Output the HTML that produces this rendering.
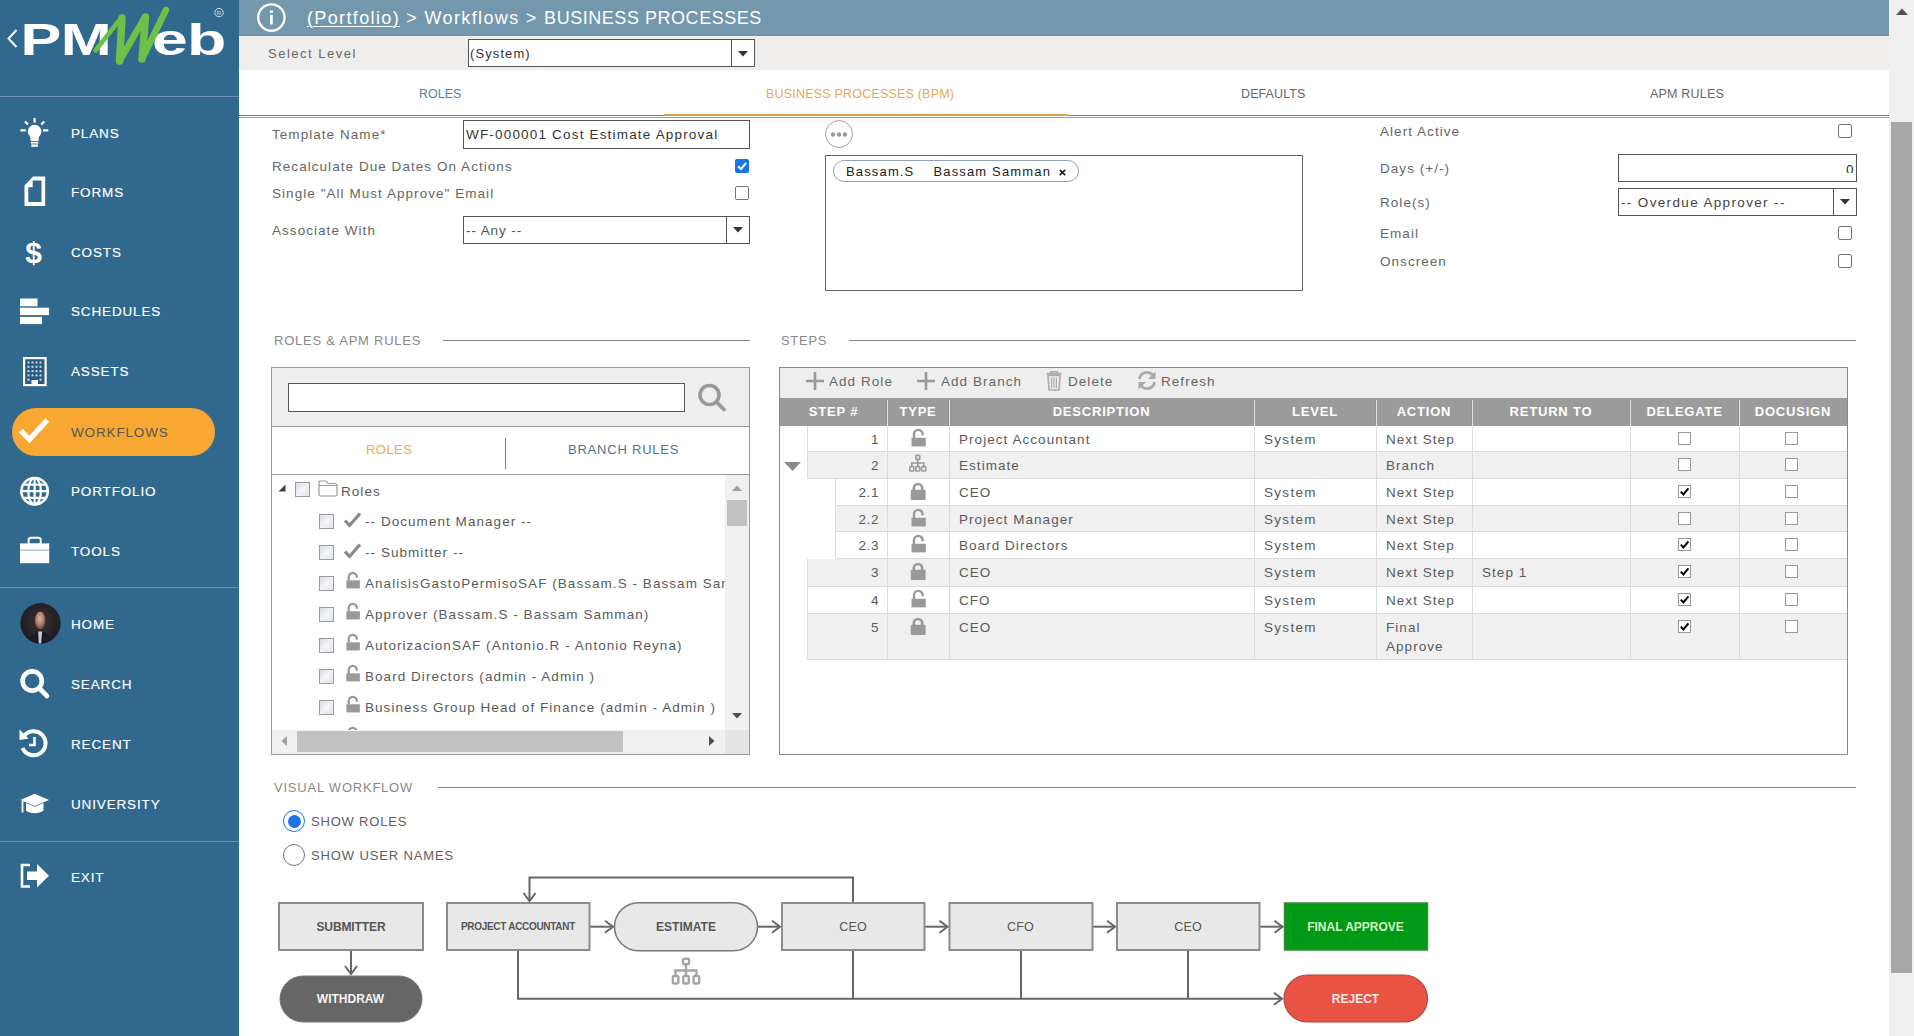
<!DOCTYPE html>
<html><head><meta charset="utf-8">
<style>
*{box-sizing:border-box;margin:0;padding:0}
html,body{width:1914px;height:1036px;overflow:hidden;background:#fff;font-family:"Liberation Sans",sans-serif;color:#555}
.a{position:absolute}
.t{position:absolute;white-space:nowrap}
#side{position:absolute;left:0;top:0;width:239px;height:1036px;background:#31688e}
.nav{position:absolute;left:71px;height:20px;line-height:20px;font-size:13.5px;color:#fff;letter-spacing:0.85px;white-space:nowrap;-webkit-text-stroke:0.15px currentColor}
.sep{position:absolute;left:0;width:239px;height:1px;background:#6b93b3}
.ic{position:absolute}
.lab{height:19px;line-height:19px;font-size:13.5px;letter-spacing:1.05px;color:#666}
.sec{height:19px;line-height:19px;font-size:13px;letter-spacing:0.75px;color:#888}
.tx{height:20px;line-height:20px;font-size:13.5px;letter-spacing:1.05px;color:#5a5a5a}
.hd{height:20px;line-height:20px;font-size:13px;font-weight:bold;letter-spacing:0.8px;color:#fff;text-align:center}
.gcb{width:13px;height:13px;border:1px solid #999;background:#fff}
.cb{width:14px;height:14px;border:1px solid #767676;border-radius:2px;background:#fff}
</style></head><body>
<div id="side">
  <svg class="a" style="left:0;top:0" width="239" height="96" viewBox="0 0 239 96">
    <path d="M16.5 30 L8.5 38.5 L16.5 47" fill="none" stroke="#fff" stroke-width="2"/>
    <text transform="translate(20.5,55.2) scale(1.36,1)" font-family="Liberation Sans" font-weight="bold" font-size="45" fill="#fff" letter-spacing="-0.5">PM</text>
    <text transform="translate(152,55.2) scale(1.43,1)" font-family="Liberation Sans" font-weight="bold" font-size="45" fill="#fff" letter-spacing="-0.5">eb</text>
    <g fill="none" stroke="#6cc04a" stroke-linecap="round" stroke-linejoin="round">
    <path d="M95.5 50.5 L121.5 17.5" stroke-width="4.5"/>
    <path d="M122 18 L119.5 61" stroke-width="7.5"/>
    <path d="M119.5 61 L145 17" stroke-width="6.5"/>
    <path d="M145.5 17 L142 59" stroke-width="7.5"/>
    <path d="M142 59 L166 10" stroke-width="6.5"/>
    </g>
    <circle cx="219" cy="12.6" r="4.2" fill="none" stroke="#cfe0ee" stroke-width="1"/>
    <text x="219" y="14.8" font-family="Liberation Sans" font-size="6" fill="#cfe0ee" text-anchor="middle">R</text>
  </svg>
  <div class="sep" style="top:96px"></div>
  <svg class="a" style="left:0;top:100px" width="239" height="800" viewBox="0 100 239 800">
    <!-- bulb -->
    <circle cx="34.6" cy="131.5" r="6.8" fill="#fff"/>
    <path d="M30 134 L39.2 134 L38.5 141 L30.7 141 Z" fill="#fff"/>
    <rect x="30.8" y="141.8" width="7.6" height="1.8" fill="#fff"/>
    <rect x="31.3" y="144.4" width="6.6" height="2.4" fill="#fff"/>
    <path d="M34.6 118 V122.5 M20.5 130.3 H25.8 M43 130.3 H48.3 M25 121.5 L28 124.5 M44.2 121.5 L41.2 124.5" stroke="#fff" stroke-width="2.2"/>
    <!-- forms -->
    <path d="M33 176.6 L45.2 176.6 L45.2 206 L24.5 206 L24.5 185.5 Z M32.7 180.5 L32.7 187.2 L28.3 187.2 L28.3 201.9 L41.5 201.9 L41.5 180.5 Z" fill="#fff" fill-rule="evenodd"/>
    <!-- $ -->
    <text x="33.7" y="263" font-family="Liberation Sans" font-weight="bold" font-size="30" fill="#fff" text-anchor="middle">$</text>
    <!-- schedules -->
    <rect x="20" y="298.5" width="17.5" height="7.8" fill="#fff"/>
    <rect x="20" y="307.7" width="29" height="7.4" fill="#fff"/>
    <rect x="20" y="316.9" width="22" height="7.2" fill="#fff"/>
    <!-- assets -->
    <rect x="23" y="357" width="23.7" height="29.2" fill="#fff"/>
    <rect x="25.2" y="359.2" width="19.3" height="24.8" fill="#2a5a80"/>
    <g fill="#c8dcea">
      <rect x="27.5" y="361.5" width="2" height="2"/><rect x="31.5" y="361.5" width="2" height="2"/><rect x="35.5" y="361.5" width="2" height="2"/><rect x="39.5" y="361.5" width="2" height="2"/>
      <rect x="27.5" y="365.8" width="2" height="2"/><rect x="31.5" y="365.8" width="2" height="2"/><rect x="35.5" y="365.8" width="2" height="2"/><rect x="39.5" y="365.8" width="2" height="2"/>
      <rect x="27.5" y="370.1" width="2" height="2"/><rect x="31.5" y="370.1" width="2" height="2"/><rect x="35.5" y="370.1" width="2" height="2"/><rect x="39.5" y="370.1" width="2" height="2"/>
      <rect x="27.5" y="374.4" width="2" height="2"/><rect x="31.5" y="374.4" width="2" height="2"/><rect x="35.5" y="374.4" width="2" height="2"/><rect x="39.5" y="374.4" width="2" height="2"/>
      <rect x="27.5" y="378.7" width="2" height="2"/><rect x="39.5" y="378.7" width="2" height="2"/>
    </g>
    <rect x="31.5" y="380" width="6.5" height="5" fill="#fff"/>
    <!-- check -->
    <path d="M22.5 432.5 L29.5 439.5 L45.5 422" fill="none" stroke="#fff" stroke-width="5.2" stroke-linecap="square"/>
    <!-- globe -->
    <circle cx="34.6" cy="491.2" r="13.2" fill="none" stroke="#fff" stroke-width="2.6"/>
    <ellipse cx="34.6" cy="491.2" rx="6.3" ry="13.2" fill="none" stroke="#fff" stroke-width="2.2"/>
    <path d="M34.6 478 V504.4 M21.4 491.2 H47.8 M23.2 484.6 H46 M23.2 497.8 H46" stroke="#fff" stroke-width="2.2"/>
    <!-- briefcase -->
    <rect x="28.6" y="537.8" width="12.2" height="7" rx="2.5" fill="none" stroke="#fff" stroke-width="2"/>
    <rect x="20" y="543.4" width="29.2" height="19.8" fill="#fff"/>
    <rect x="20" y="549.6" width="29.2" height="1.2" fill="#9fb6c6"/>
    <!-- avatar -->
    <defs><radialGradient id="av" cx="0.5" cy="0.45" r="0.55"><stop offset="0" stop-color="#3a3032"/><stop offset="1" stop-color="#1e1b20"/></radialGradient><radialGradient id="face" cx="0.45" cy="0.4" r="0.6"><stop offset="0" stop-color="#d8b2a2"/><stop offset="0.6" stop-color="#a87e6e"/><stop offset="1" stop-color="#5a4038"/></radialGradient></defs>
    <circle cx="40.5" cy="623.3" r="20.2" fill="url(#av)"/>
    <ellipse cx="40.3" cy="620.5" rx="5.3" ry="9" fill="url(#face)"/>
    <clipPath id="avc"><circle cx="40.5" cy="623.3" r="20.2"/></clipPath><g clip-path="url(#avc)"><path d="M27 645 Q31 633 40 631 Q49 633 54 645 Z" fill="#1a1a24"/>
    <path d="M38.2 631.5 L42.2 631.5 L41 645 L38.8 645 Z" fill="#c8c8d4"/></g>
    <!-- search -->
    <circle cx="32.2" cy="681" r="9.6" fill="none" stroke="#fff" stroke-width="4.6"/>
    <path d="M39 688 L47 696" stroke="#fff" stroke-width="4.6" stroke-linecap="round"/>
    <!-- recent -->
    <path d="M24 736 A12 12 0 1 1 22.5 748" fill="none" stroke="#fff" stroke-width="4"/>
    <path d="M19.5 729.5 L28.5 738.5 L19.5 740 Z" fill="#fff"/>
    <path d="M34.5 737 V745 H29" fill="none" stroke="#fff" stroke-width="2.6"/>
    <!-- university -->
    <path d="M20.4 800 L34.7 793.8 L49 800 L34.7 806 Z" fill="#fff"/>
    <path d="M26 803 V810.5 C30 814 39 814 43.5 810.5 V803 L34.7 806.8 Z" fill="#fff"/>
    <path d="M22.5 801 V812.5" stroke="#fff" stroke-width="1.8"/>
    <!-- exit -->
    <path d="M30 865 H22 V886.5 H30" fill="none" stroke="#fff" stroke-width="2.6"/>
    <path d="M27 871.5 H37 V864 L49 875.7 L37 887.5 V880 H27 Z" fill="#fff"/>
  </svg>
  <div class="nav" style="top:124px">PLANS</div>
  <div class="nav" style="top:183px">FORMS</div>
  <div class="nav" style="top:243px">COSTS</div>
  <div class="nav" style="top:302px">SCHEDULES</div>
  <div class="nav" style="top:362px">ASSETS</div>
  <div class="a" style="left:12px;top:408px;width:203px;height:48px;border-radius:24px;background:#f8a832"></div>
  <svg class="a" style="left:0;top:400px" width="60" height="60" viewBox="0 400 60 60"><path d="M22.5 432.5 L29.5 439.5 L45.5 422" fill="none" stroke="#fff" stroke-width="5.2" stroke-linecap="square"/></svg>
  <div class="nav" style="top:423px;color:#555;-webkit-text-stroke:0">WORKFLOWS</div>
  <div class="nav" style="top:482px">PORTFOLIO</div>
  <div class="nav" style="top:542px">TOOLS</div>
  <div class="sep" style="top:587px"></div>
  <div class="nav" style="top:615px">HOME</div>
  <div class="nav" style="top:675px">SEARCH</div>
  <div class="nav" style="top:735px">RECENT</div>
  <div class="nav" style="top:795px">UNIVERSITY</div>
  <div class="sep" style="top:841px"></div>
  <div class="nav" style="top:868px">EXIT</div>
</div>
<!-- header -->
<div class="a" style="left:239px;top:0;width:1650px;height:35px;background:#7397ad"></div>
<div class="a" style="left:239px;top:35px;width:1650px;height:1px;background:#788c9c"></div>
<svg class="a" style="left:255px;top:2px" width="34" height="32" viewBox="255 2 34 32">
  <circle cx="271.4" cy="17.6" r="13.2" fill="none" stroke="#fff" stroke-width="2.4"/>
  <circle cx="271.4" cy="11.6" r="1.7" fill="#fff"/>
  <rect x="270" y="15" width="2.8" height="9.5" fill="#fff"/>
</svg>
<div class="t" style="left:307px;top:8px;height:20px;line-height:20px;font-size:18px;letter-spacing:1.36px;color:#fff"><span style="text-decoration:underline;text-underline-offset:2px;text-decoration-thickness:1px">(Portfolio)</span> &gt; Workflows &gt; <span style="letter-spacing:0.54px">BUSINESS PROCESSES</span></div>
<!-- select level -->
<div class="a" style="left:239px;top:36px;width:1650px;height:34px;background:#f0eeec"></div>
<div class="t" style="left:268px;top:45px;height:18px;line-height:18px;font-size:13px;letter-spacing:1.5px;color:#666">Select Level</div>
<div class="a" style="left:468px;top:39px;width:287px;height:28px;border:1px solid #555;background:#fff"></div>
<div class="a" style="left:731px;top:40px;width:1px;height:26px;background:#555"></div>
<svg class="a" style="left:737px;top:50px" width="12" height="8"><path d="M1 1 H11 L6 6.5 Z" fill="#333"/></svg>
<div class="t" style="left:470px;top:45px;height:18px;line-height:18px;font-size:13px;letter-spacing:1.1px;color:#333">(System)</div>
<!-- tabs -->
<div class="t" style="left:419px;top:86px;height:17px;line-height:17px;font-size:12.5px;letter-spacing:0px;color:#4d84a6">ROLES</div>
<div class="t" style="left:766px;top:86px;height:17px;line-height:17px;font-size:12.5px;letter-spacing:0.2px;color:#e9a756">BUSINESS PROCESSES (BPM)</div>
<div class="t" style="left:1241px;top:86px;height:17px;line-height:17px;font-size:12.5px;letter-spacing:0.1px;color:#666">DEFAULTS</div>
<div class="t" style="left:1650px;top:86px;height:17px;line-height:17px;font-size:12.5px;letter-spacing:0.2px;color:#666">APM RULES</div>
<div class="a" style="left:239px;top:115px;width:1650px;height:1px;background:#7a7a7a"></div>
<div class="a" style="left:239px;top:117px;width:1650px;height:1px;background:#9a9a9a"></div>
<div class="a" style="left:664px;top:114px;width:404px;height:2px;background:#e0a050"></div>
<!-- form left -->
<div class="t lab" style="left:272px;top:125px">Template Name*</div>
<div class="t lab" style="left:272px;top:157px">Recalculate Due Dates On Actions</div>
<div class="t lab" style="left:272px;top:184px">Single "All Must Approve" Email</div>
<div class="t lab" style="left:272px;top:221px">Associate With</div>
<div class="a" style="left:463px;top:120px;width:287px;height:29px;border:1px solid #555;background:#fff"></div>
<div class="t" style="left:466px;top:125px;height:19px;line-height:19px;font-size:13.5px;letter-spacing:1.18px;color:#333">WF-000001 Cost Estimate Approval</div>
<div class="a" style="left:735px;top:159px;width:14px;height:14px;border-radius:2px;background:#1a73e8"></div>
<svg class="a" style="left:735px;top:159px" width="14" height="14"><path d="M3 7.2 L6 10 L11.2 3.8" fill="none" stroke="#fff" stroke-width="2"/></svg>
<div class="a cb" style="left:735px;top:186px"></div>
<div class="a" style="left:463px;top:216px;width:287px;height:28px;border:1px solid #555;background:#fff"></div>
<div class="a" style="left:726px;top:217px;width:1px;height:26px;background:#555"></div>
<svg class="a" style="left:732px;top:226px" width="12" height="8"><path d="M1 1 H11 L6 6.5 Z" fill="#333"/></svg>
<div class="t" style="left:466px;top:221px;height:19px;line-height:19px;font-size:13.5px;letter-spacing:0.9px;color:#555">-- Any --</div>
<!-- middle -->
<div class="a" style="left:825px;top:120px;width:28px;height:28px;border-radius:50%;border:1.5px solid #a0a0a0;background:#fff"></div>
<svg class="a" style="left:829px;top:130px" width="20" height="9"><circle cx="4" cy="4.5" r="2.2" fill="#999"/><circle cx="10" cy="4.5" r="2.2" fill="#999"/><circle cx="16" cy="4.5" r="2.2" fill="#999"/></svg>
<div class="a" style="left:825px;top:155px;width:478px;height:136px;border:1px solid #666;background:#fff"></div>
<div class="a" style="left:833px;top:160px;width:246px;height:22px;border-radius:11px;border:1px solid #8fa3c0;background:#fff"></div>
<div class="t" style="left:846px;top:163px;height:17px;line-height:17px;font-size:13px;letter-spacing:1.15px;color:#222">Bassam.S &nbsp;&nbsp; Bassam Samman</div>
<svg class="a" style="left:1058px;top:167.5px" width="9" height="9"><path d="M1.8 1.8 L7.2 7.2 M7.2 1.8 L1.8 7.2" stroke="#222" stroke-width="1.7"/></svg>
<!-- right -->
<div class="t lab" style="left:1380px;top:122px">Alert Active</div>
<div class="t lab" style="left:1380px;top:159px">Days (+/-)</div>
<div class="t lab" style="left:1380px;top:193px">Role(s)</div>
<div class="t lab" style="left:1380px;top:224px">Email</div>
<div class="t lab" style="left:1380px;top:252px">Onscreen</div>
<div class="a cb" style="left:1838px;top:124px"></div>
<div class="a" style="left:1618px;top:154px;width:239px;height:28px;border:1px solid #555;background:#fff"></div>
<div class="a" style="left:1840px;top:164px;width:16px;height:9px;overflow:hidden"><div class="t" style="left:6px;top:-4px;height:19px;line-height:19px;font-size:13.5px;color:#333">0</div></div>
<div class="a" style="left:1618px;top:188px;width:239px;height:28px;border:1px solid #555;background:#fff"></div>
<div class="a" style="left:1833px;top:189px;width:1px;height:26px;background:#555"></div>
<svg class="a" style="left:1839px;top:198px" width="12" height="8"><path d="M1 1 H11 L6 6.5 Z" fill="#333"/></svg>
<div class="t" style="left:1621px;top:193px;height:19px;line-height:19px;font-size:13.5px;letter-spacing:1.35px;color:#444">-- Overdue Approver --</div>
<div class="a cb" style="left:1838px;top:226px"></div>
<div class="a cb" style="left:1838px;top:254px"></div>
<svg width="0" height="0" style="position:absolute">
<defs>
<symbol id="lko" viewBox="0 0 18 20"><path d="M5 10 V6.2 A4.3 4.3 0 0 1 13.6 6.2 V7.2" fill="none" stroke="#999" stroke-width="2.4"/><rect x="2.5" y="9.8" width="14.3" height="8.6" fill="#999"/></symbol>
<symbol id="lkc" viewBox="0 0 18 20"><path d="M4.8 10 V7.2 A4.2 4.2 0 0 1 13.2 7.2 V10" fill="none" stroke="#999" stroke-width="2.6"/><rect x="1.8" y="8.8" width="14.8" height="10.2" rx="1" fill="#999"/></symbol>
<symbol id="brn" viewBox="0 0 18 20"><g fill="none" stroke="#999" stroke-width="1.6"><rect x="6.8" y="1.4" width="4" height="4" rx="0.8"/><path d="M8.8 5.4 V9 M2.8 12.2 V9 H14.8 V12.2 M8.8 9 V12.2"/><rect x="0.8" y="12.6" width="4" height="4.4" rx="0.8"/><rect x="6.8" y="12.6" width="4" height="4.4" rx="0.8"/><rect x="12.8" y="12.6" width="4" height="4.4" rx="0.8"/></g></symbol>
<linearGradient id="tcg" x1="0" y1="0" x2="1" y2="1"><stop offset="0" stop-color="#d4d8e0"/><stop offset="0.5" stop-color="#f4f6fa"/><stop offset="1" stop-color="#dfe2e8"/></linearGradient>
<symbol id="tcb" viewBox="0 0 15 15"><rect x="0.5" y="0.5" width="14" height="14" fill="url(#tcg)" stroke="#9a9a9a"/><rect x="3" y="3" width="9" height="9" fill="none" stroke="#e6e8ee" stroke-width="1"/></symbol>
</defs></svg>
<div class="t sec" style="left:274px;top:331px">ROLES &amp; APM RULES</div>
<div class="a" style="left:443px;top:340px;width:307px;height:1px;background:#888"></div>
<div class="t sec" style="left:781px;top:331px;letter-spacing:0.7px">STEPS</div>
<div class="a" style="left:849px;top:340px;width:1007px;height:1px;background:#888"></div>
<div class="a" style="left:271px;top:367px;width:479px;height:388px;border:1px solid #999;background:#fff"></div>
<div class="a" style="left:272px;top:368px;width:477px;height:59px;background:#eee;border-bottom:1px solid #999"></div>
<div class="a" style="left:288px;top:383px;width:397px;height:29px;border:1.5px solid #555;background:#fff"></div>
<svg class="a" style="left:694px;top:380px" width="36" height="36" viewBox="694 380 36 36"><circle cx="709.5" cy="395" r="9.5" fill="none" stroke="#999" stroke-width="3.6"/><path d="M716.5 402 L724 409.5" stroke="#999" stroke-width="3.8" stroke-linecap="round"/></svg>
<div class="a" style="left:272px;top:474px;width:477px;height:1px;background:#999"></div>
<div class="t" style="left:366px;top:440px;height:19px;line-height:19px;font-size:13px;letter-spacing:0.45px;color:#eeaa44">ROLES</div>
<div class="t" style="left:568px;top:440px;height:19px;line-height:19px;font-size:13px;letter-spacing:0.78px;color:#4d7690">BRANCH RULES</div>
<div class="a" style="left:505px;top:438px;width:1px;height:31px;background:#3f8fb5"></div>
<div class="a" style="left:272px;top:475px;width:453px;height:255px;overflow:hidden">
<svg class="a" style="left:6px;top:9px" width="8" height="8"><path d="M7.5 0.5 V7.5 H0.5 Z" fill="#3a3f5c"/></svg>
<svg class="a" style="left:23px;top:7px" width="15" height="15"><use href="#tcb"/></svg>
<svg class="a" style="left:46px;top:5px" width="20" height="17" viewBox="0 0 20 17"><path d="M1 3 Q1 1 3 1 H8 L10 3.5 H17 Q19 3.5 19 5.5 V14.5 Q19 16 17.5 16 H2.5 Q1 16 1 14.5 Z" fill="none" stroke="#999" stroke-width="1.2"/><path d="M1 5.5 H19" stroke="#999" stroke-width="1"/></svg>
<div class="t tx" style="left:69px;top:7px">Roles</div>
<svg class="a" style="left:47px;top:39px" width="15" height="15"><use href="#tcb"/></svg>
<svg class="a" style="left:71px;top:37px" width="19" height="16" viewBox="0 0 19 16"><path d="M2 8.5 L6.5 13.5 L17 1.5" fill="none" stroke="#888" stroke-width="3.2" stroke-linejoin="round"/></svg>
<div class="t tx" style="left:93px;top:37px">-- Document Manager --</div>
<svg class="a" style="left:47px;top:70px" width="15" height="15"><use href="#tcb"/></svg>
<svg class="a" style="left:71px;top:68px" width="19" height="16" viewBox="0 0 19 16"><path d="M2 8.5 L6.5 13.5 L17 1.5" fill="none" stroke="#888" stroke-width="3.2" stroke-linejoin="round"/></svg>
<div class="t tx" style="left:93px;top:68px">-- Submitter --</div>
<svg class="a" style="left:47px;top:101px" width="15" height="15"><use href="#tcb"/></svg>
<svg class="a" style="left:72px;top:96px" width="17" height="19" viewBox="0 0 18 20"><use href="#lko"/></svg>
<div class="t tx" style="left:93px;top:99px">AnalisisGastoPermisoSAF (Bassam.S - Bassam Samman)</div>
<svg class="a" style="left:47px;top:132px" width="15" height="15"><use href="#tcb"/></svg>
<svg class="a" style="left:72px;top:127px" width="17" height="19" viewBox="0 0 18 20"><use href="#lko"/></svg>
<div class="t tx" style="left:93px;top:130px">Approver (Bassam.S - Bassam Samman)</div>
<svg class="a" style="left:47px;top:163px" width="15" height="15"><use href="#tcb"/></svg>
<svg class="a" style="left:72px;top:158px" width="17" height="19" viewBox="0 0 18 20"><use href="#lko"/></svg>
<div class="t tx" style="left:93px;top:161px">AutorizacionSAF (Antonio.R - Antonio Reyna)</div>
<svg class="a" style="left:47px;top:194px" width="15" height="15"><use href="#tcb"/></svg>
<svg class="a" style="left:72px;top:189px" width="17" height="19" viewBox="0 0 18 20"><use href="#lko"/></svg>
<div class="t tx" style="left:93px;top:192px">Board Directors (admin - Admin )</div>
<svg class="a" style="left:47px;top:225px" width="15" height="15"><use href="#tcb"/></svg>
<svg class="a" style="left:72px;top:220px" width="17" height="19" viewBox="0 0 18 20"><use href="#lko"/></svg>
<div class="t tx" style="left:93px;top:223px">Business Group Head of Finance (admin - Admin )</div>
<svg class="a" style="left:47px;top:256px" width="15" height="15"><use href="#tcb"/></svg>
<svg class="a" style="left:72px;top:251px" width="17" height="19" viewBox="0 0 18 20"><use href="#lko"/></svg>
<div class="t tx" style="left:93px;top:254px">Cost Controller</div>
</div>
<div class="a" style="left:725px;top:475px;width:24px;height:255px;background:#f0f0f0"></div>
<svg class="a" style="left:731px;top:484px" width="12" height="8"><path d="M1 7 H11 L6 1.5 Z" fill="#a0a0a0"/></svg>
<div class="a" style="left:727px;top:500px;width:20px;height:26px;background:#c1c1c1"></div>
<svg class="a" style="left:731px;top:712px" width="12" height="8"><path d="M1 1 H11 L6 6.5 Z" fill="#505050"/></svg>
<div class="a" style="left:272px;top:730px;width:477px;height:24px;background:#f0f0f0"></div>
<div class="a" style="left:297px;top:731px;width:326px;height:21px;background:#c1c1c1"></div>
<svg class="a" style="left:280px;top:735px" width="8" height="12"><path d="M7 1 V11 L1.5 6 Z" fill="#a0a0a0"/></svg>
<svg class="a" style="left:708px;top:735px" width="8" height="12"><path d="M1 1 V11 L6.5 6 Z" fill="#505050"/></svg>
<div class="a" style="left:725px;top:730px;width:24px;height:24px;background:#e4e4e4"></div>
<div class="a" style="left:779px;top:367px;width:1069px;height:388px;border:1px solid #888;background:#fff"></div>
<div class="a" style="left:780px;top:368px;width:1067px;height:30px;background:#eee"></div>
<svg class="a" style="left:805px;top:371px" width="20" height="20"><path d="M10 1 V19 M1 10 H19" stroke="#999" stroke-width="2.6"/></svg>
<div class="t tx" style="left:829px;top:372px;color:#666">Add Role</div>
<svg class="a" style="left:916px;top:371px" width="20" height="20"><path d="M10 1 V19 M1 10 H19" stroke="#999" stroke-width="2.6"/></svg>
<div class="t tx" style="left:941px;top:372px;color:#666">Add Branch</div>
<svg class="a" style="left:1045px;top:370px" width="18" height="21" viewBox="0 0 18 21"><path d="M5.5 3.5 V1.8 H12.5 V3.5" fill="none" stroke="#aaa" stroke-width="1.4"/><path d="M1.5 3.8 H16.5" stroke="#aaa" stroke-width="2"/><path d="M3 5.5 H15 L14 20 H4 Z" fill="none" stroke="#aaa" stroke-width="1.6"/><path d="M6.6 7.5 V18 M9 7.5 V18 M11.4 7.5 V18" stroke="#aaa" stroke-width="1.2"/></svg>
<div class="t tx" style="left:1068px;top:372px;color:#666">Delete</div>
<svg class="a" style="left:1136px;top:370px" width="22" height="21" viewBox="0 0 22 21"><path d="M3.5 9 A7.5 7.5 0 0 1 17 5.5" fill="none" stroke="#aaa" stroke-width="2.8"/><path d="M19.5 1.5 V9 H12 Z" fill="#aaa"/><path d="M18.5 12 A7.5 7.5 0 0 1 5 15.5" fill="none" stroke="#aaa" stroke-width="2.8"/><path d="M2.5 19.5 V12 H10 Z" fill="#aaa"/></svg>
<div class="t tx" style="left:1161px;top:372px;color:#666">Refresh</div>
<div class="a" style="left:780px;top:398px;width:1067px;height:28px;background:#9b9b9b"></div>
<div class="t hd" style="left:780px;width:107px;top:402px">STEP #</div>
<div class="t hd" style="left:887px;width:62px;top:402px">TYPE</div>
<div class="t hd" style="left:949px;width:305px;top:402px">DESCRIPTION</div>
<div class="t hd" style="left:1254px;width:122px;top:402px">LEVEL</div>
<div class="t hd" style="left:1376px;width:96px;top:402px">ACTION</div>
<div class="t hd" style="left:1472px;width:158px;top:402px">RETURN TO</div>
<div class="t hd" style="left:1630px;width:109px;top:402px">DELEGATE</div>
<div class="t hd" style="left:1739px;width:108px;top:402px">DOCUSIGN</div>
<div class="a" style="left:887px;top:400px;width:1px;height:26px;background:#e2e2e2"></div>
<div class="a" style="left:886px;top:400px;width:1px;height:26px;background:#949494"></div>
<div class="a" style="left:949px;top:400px;width:1px;height:26px;background:#e2e2e2"></div>
<div class="a" style="left:948px;top:400px;width:1px;height:26px;background:#949494"></div>
<div class="a" style="left:1254px;top:400px;width:1px;height:26px;background:#e2e2e2"></div>
<div class="a" style="left:1253px;top:400px;width:1px;height:26px;background:#949494"></div>
<div class="a" style="left:1376px;top:400px;width:1px;height:26px;background:#e2e2e2"></div>
<div class="a" style="left:1375px;top:400px;width:1px;height:26px;background:#949494"></div>
<div class="a" style="left:1472px;top:400px;width:1px;height:26px;background:#e2e2e2"></div>
<div class="a" style="left:1471px;top:400px;width:1px;height:26px;background:#949494"></div>
<div class="a" style="left:1630px;top:400px;width:1px;height:26px;background:#e2e2e2"></div>
<div class="a" style="left:1629px;top:400px;width:1px;height:26px;background:#949494"></div>
<div class="a" style="left:1739px;top:400px;width:1px;height:26px;background:#e2e2e2"></div>
<div class="a" style="left:1738px;top:400px;width:1px;height:26px;background:#949494"></div>
<div class="a" style="left:807px;top:426px;width:1040px;height:26px;background:#fff;border-bottom:1px solid #dcdcdc"></div>
<div class="a" style="left:807px;top:426px;width:1px;height:26px;background:#dcdcdc"></div>
<div class="a" style="left:887px;top:426px;width:1px;height:26px;background:#dcdcdc"></div>
<div class="a" style="left:949px;top:426px;width:1px;height:26px;background:#dcdcdc"></div>
<div class="a" style="left:1254px;top:426px;width:1px;height:26px;background:#dcdcdc"></div>
<div class="a" style="left:1376px;top:426px;width:1px;height:26px;background:#dcdcdc"></div>
<div class="a" style="left:1472px;top:426px;width:1px;height:26px;background:#dcdcdc"></div>
<div class="a" style="left:1630px;top:426px;width:1px;height:26px;background:#dcdcdc"></div>
<div class="a" style="left:1739px;top:426px;width:1px;height:26px;background:#dcdcdc"></div>
<div class="t tx" style="left:807px;width:72px;text-align:right;top:430px;letter-spacing:0.6px">1</div>
<svg class="a" style="left:909px;top:428px" width="18" height="20"><use href="#lko"/></svg>
<div class="t tx" style="left:959px;top:430px">Project Accountant</div>
<div class="t tx" style="left:1264px;top:430px;letter-spacing:1.3px">System</div>
<div class="t tx" style="left:1386px;top:430px;white-space:normal;line-height:19px">Next Step</div>
<div class="a gcb" style="left:1678px;top:432px"></div>
<div class="a gcb" style="left:1785px;top:432px"></div>
<div class="a" style="left:807px;top:452px;width:1040px;height:27px;background:#f0f0f0;border-bottom:1px solid #dcdcdc"></div>
<div class="a" style="left:807px;top:452px;width:1px;height:27px;background:#dcdcdc"></div>
<div class="a" style="left:887px;top:452px;width:1px;height:27px;background:#dcdcdc"></div>
<div class="a" style="left:949px;top:452px;width:1px;height:27px;background:#dcdcdc"></div>
<div class="a" style="left:1254px;top:452px;width:1px;height:27px;background:#dcdcdc"></div>
<div class="a" style="left:1376px;top:452px;width:1px;height:27px;background:#dcdcdc"></div>
<div class="a" style="left:1472px;top:452px;width:1px;height:27px;background:#dcdcdc"></div>
<div class="a" style="left:1630px;top:452px;width:1px;height:27px;background:#dcdcdc"></div>
<div class="a" style="left:1739px;top:452px;width:1px;height:27px;background:#dcdcdc"></div>
<div class="t tx" style="left:807px;width:72px;text-align:right;top:456px;letter-spacing:0.6px">2</div>
<svg class="a" style="left:909px;top:454px" width="18" height="20"><use href="#brn"/></svg>
<div class="t tx" style="left:959px;top:456px">Estimate</div>
<div class="t tx" style="left:1386px;top:456px;white-space:normal;line-height:19px">Branch</div>
<div class="a gcb" style="left:1678px;top:458px"></div>
<div class="a gcb" style="left:1785px;top:458px"></div>
<div class="a" style="left:835px;top:479px;width:1012px;height:27px;background:#fff;border-bottom:1px solid #dcdcdc"></div>
<div class="a" style="left:835px;top:479px;width:1px;height:27px;background:#dcdcdc"></div>
<div class="a" style="left:887px;top:479px;width:1px;height:27px;background:#dcdcdc"></div>
<div class="a" style="left:949px;top:479px;width:1px;height:27px;background:#dcdcdc"></div>
<div class="a" style="left:1254px;top:479px;width:1px;height:27px;background:#dcdcdc"></div>
<div class="a" style="left:1376px;top:479px;width:1px;height:27px;background:#dcdcdc"></div>
<div class="a" style="left:1472px;top:479px;width:1px;height:27px;background:#dcdcdc"></div>
<div class="a" style="left:1630px;top:479px;width:1px;height:27px;background:#dcdcdc"></div>
<div class="a" style="left:1739px;top:479px;width:1px;height:27px;background:#dcdcdc"></div>
<div class="t tx" style="left:835px;width:44px;text-align:right;top:483px;letter-spacing:0.6px">2.1</div>
<svg class="a" style="left:909px;top:481px" width="18" height="20"><use href="#lkc"/></svg>
<div class="t tx" style="left:959px;top:483px">CEO</div>
<div class="t tx" style="left:1264px;top:483px;letter-spacing:1.3px">System</div>
<div class="t tx" style="left:1386px;top:483px;white-space:normal;line-height:19px">Next Step</div>
<div class="a gcb" style="left:1678px;top:485px"><svg width="11" height="11" style="position:absolute;left:0;top:0"><path d="M1.8 5.6 L4.4 8.4 L9.4 2.4" fill="none" stroke="#000" stroke-width="2"/></svg></div>
<div class="a gcb" style="left:1785px;top:485px"></div>
<div class="a" style="left:835px;top:506px;width:1012px;height:26px;background:#f0f0f0;border-bottom:1px solid #dcdcdc"></div>
<div class="a" style="left:835px;top:506px;width:1px;height:26px;background:#dcdcdc"></div>
<div class="a" style="left:887px;top:506px;width:1px;height:26px;background:#dcdcdc"></div>
<div class="a" style="left:949px;top:506px;width:1px;height:26px;background:#dcdcdc"></div>
<div class="a" style="left:1254px;top:506px;width:1px;height:26px;background:#dcdcdc"></div>
<div class="a" style="left:1376px;top:506px;width:1px;height:26px;background:#dcdcdc"></div>
<div class="a" style="left:1472px;top:506px;width:1px;height:26px;background:#dcdcdc"></div>
<div class="a" style="left:1630px;top:506px;width:1px;height:26px;background:#dcdcdc"></div>
<div class="a" style="left:1739px;top:506px;width:1px;height:26px;background:#dcdcdc"></div>
<div class="t tx" style="left:835px;width:44px;text-align:right;top:510px;letter-spacing:0.6px">2.2</div>
<svg class="a" style="left:909px;top:508px" width="18" height="20"><use href="#lko"/></svg>
<div class="t tx" style="left:959px;top:510px">Project Manager</div>
<div class="t tx" style="left:1264px;top:510px;letter-spacing:1.3px">System</div>
<div class="t tx" style="left:1386px;top:510px;white-space:normal;line-height:19px">Next Step</div>
<div class="a gcb" style="left:1678px;top:512px"></div>
<div class="a gcb" style="left:1785px;top:512px"></div>
<div class="a" style="left:835px;top:532px;width:1012px;height:27px;background:#fff;border-bottom:1px solid #dcdcdc"></div>
<div class="a" style="left:835px;top:532px;width:1px;height:27px;background:#dcdcdc"></div>
<div class="a" style="left:887px;top:532px;width:1px;height:27px;background:#dcdcdc"></div>
<div class="a" style="left:949px;top:532px;width:1px;height:27px;background:#dcdcdc"></div>
<div class="a" style="left:1254px;top:532px;width:1px;height:27px;background:#dcdcdc"></div>
<div class="a" style="left:1376px;top:532px;width:1px;height:27px;background:#dcdcdc"></div>
<div class="a" style="left:1472px;top:532px;width:1px;height:27px;background:#dcdcdc"></div>
<div class="a" style="left:1630px;top:532px;width:1px;height:27px;background:#dcdcdc"></div>
<div class="a" style="left:1739px;top:532px;width:1px;height:27px;background:#dcdcdc"></div>
<div class="t tx" style="left:835px;width:44px;text-align:right;top:536px;letter-spacing:0.6px">2.3</div>
<svg class="a" style="left:909px;top:534px" width="18" height="20"><use href="#lko"/></svg>
<div class="t tx" style="left:959px;top:536px">Board Directors</div>
<div class="t tx" style="left:1264px;top:536px;letter-spacing:1.3px">System</div>
<div class="t tx" style="left:1386px;top:536px;white-space:normal;line-height:19px">Next Step</div>
<div class="a gcb" style="left:1678px;top:538px"><svg width="11" height="11" style="position:absolute;left:0;top:0"><path d="M1.8 5.6 L4.4 8.4 L9.4 2.4" fill="none" stroke="#000" stroke-width="2"/></svg></div>
<div class="a gcb" style="left:1785px;top:538px"></div>
<div class="a" style="left:807px;top:559px;width:1040px;height:28px;background:#f0f0f0;border-bottom:1px solid #dcdcdc"></div>
<div class="a" style="left:807px;top:559px;width:1px;height:28px;background:#dcdcdc"></div>
<div class="a" style="left:887px;top:559px;width:1px;height:28px;background:#dcdcdc"></div>
<div class="a" style="left:949px;top:559px;width:1px;height:28px;background:#dcdcdc"></div>
<div class="a" style="left:1254px;top:559px;width:1px;height:28px;background:#dcdcdc"></div>
<div class="a" style="left:1376px;top:559px;width:1px;height:28px;background:#dcdcdc"></div>
<div class="a" style="left:1472px;top:559px;width:1px;height:28px;background:#dcdcdc"></div>
<div class="a" style="left:1630px;top:559px;width:1px;height:28px;background:#dcdcdc"></div>
<div class="a" style="left:1739px;top:559px;width:1px;height:28px;background:#dcdcdc"></div>
<div class="t tx" style="left:807px;width:72px;text-align:right;top:563px;letter-spacing:0.6px">3</div>
<svg class="a" style="left:909px;top:561px" width="18" height="20"><use href="#lkc"/></svg>
<div class="t tx" style="left:959px;top:563px">CEO</div>
<div class="t tx" style="left:1264px;top:563px;letter-spacing:1.3px">System</div>
<div class="t tx" style="left:1386px;top:563px;white-space:normal;line-height:19px">Next Step</div>
<div class="t tx" style="left:1482px;top:563px">Step 1</div>
<div class="a gcb" style="left:1678px;top:565px"><svg width="11" height="11" style="position:absolute;left:0;top:0"><path d="M1.8 5.6 L4.4 8.4 L9.4 2.4" fill="none" stroke="#000" stroke-width="2"/></svg></div>
<div class="a gcb" style="left:1785px;top:565px"></div>
<div class="a" style="left:807px;top:587px;width:1040px;height:27px;background:#fff;border-bottom:1px solid #dcdcdc"></div>
<div class="a" style="left:807px;top:587px;width:1px;height:27px;background:#dcdcdc"></div>
<div class="a" style="left:887px;top:587px;width:1px;height:27px;background:#dcdcdc"></div>
<div class="a" style="left:949px;top:587px;width:1px;height:27px;background:#dcdcdc"></div>
<div class="a" style="left:1254px;top:587px;width:1px;height:27px;background:#dcdcdc"></div>
<div class="a" style="left:1376px;top:587px;width:1px;height:27px;background:#dcdcdc"></div>
<div class="a" style="left:1472px;top:587px;width:1px;height:27px;background:#dcdcdc"></div>
<div class="a" style="left:1630px;top:587px;width:1px;height:27px;background:#dcdcdc"></div>
<div class="a" style="left:1739px;top:587px;width:1px;height:27px;background:#dcdcdc"></div>
<div class="t tx" style="left:807px;width:72px;text-align:right;top:591px;letter-spacing:0.6px">4</div>
<svg class="a" style="left:909px;top:589px" width="18" height="20"><use href="#lko"/></svg>
<div class="t tx" style="left:959px;top:591px">CFO</div>
<div class="t tx" style="left:1264px;top:591px;letter-spacing:1.3px">System</div>
<div class="t tx" style="left:1386px;top:591px;white-space:normal;line-height:19px">Next Step</div>
<div class="a gcb" style="left:1678px;top:593px"><svg width="11" height="11" style="position:absolute;left:0;top:0"><path d="M1.8 5.6 L4.4 8.4 L9.4 2.4" fill="none" stroke="#000" stroke-width="2"/></svg></div>
<div class="a gcb" style="left:1785px;top:593px"></div>
<div class="a" style="left:807px;top:614px;width:1040px;height:46px;background:#f0f0f0;border-bottom:1px solid #dcdcdc"></div>
<div class="a" style="left:807px;top:614px;width:1px;height:46px;background:#dcdcdc"></div>
<div class="a" style="left:887px;top:614px;width:1px;height:46px;background:#dcdcdc"></div>
<div class="a" style="left:949px;top:614px;width:1px;height:46px;background:#dcdcdc"></div>
<div class="a" style="left:1254px;top:614px;width:1px;height:46px;background:#dcdcdc"></div>
<div class="a" style="left:1376px;top:614px;width:1px;height:46px;background:#dcdcdc"></div>
<div class="a" style="left:1472px;top:614px;width:1px;height:46px;background:#dcdcdc"></div>
<div class="a" style="left:1630px;top:614px;width:1px;height:46px;background:#dcdcdc"></div>
<div class="a" style="left:1739px;top:614px;width:1px;height:46px;background:#dcdcdc"></div>
<div class="t tx" style="left:807px;width:72px;text-align:right;top:618px;letter-spacing:0.6px">5</div>
<svg class="a" style="left:909px;top:616px" width="18" height="20"><use href="#lkc"/></svg>
<div class="t tx" style="left:959px;top:618px">CEO</div>
<div class="t tx" style="left:1264px;top:618px;letter-spacing:1.3px">System</div>
<div class="t tx" style="left:1386px;top:618px;white-space:normal;line-height:19px">Final<br>Approve</div>
<div class="a gcb" style="left:1678px;top:620px"><svg width="11" height="11" style="position:absolute;left:0;top:0"><path d="M1.8 5.6 L4.4 8.4 L9.4 2.4" fill="none" stroke="#000" stroke-width="2"/></svg></div>
<div class="a gcb" style="left:1785px;top:620px"></div>
<svg class="a" style="left:783px;top:461px" width="19" height="11"><path d="M1 1 H18 L9.5 10 Z" fill="#8a8a8a"/></svg>
<div class="t sec" style="left:274px;top:778px;letter-spacing:0.78px">VISUAL WORKFLOW</div>
<div class="a" style="left:438px;top:787px;width:1418px;height:1px;background:#888"></div>
<div class="a" style="left:283px;top:810px;width:22px;height:22px;border-radius:50%;border:1.5px solid #1a73e8;background:#fff"></div>
<div class="a" style="left:287.5px;top:814.5px;width:13px;height:13px;border-radius:50%;background:#1a73e8"></div>
<div class="t" style="left:311px;top:812px;height:19px;line-height:19px;font-size:13px;letter-spacing:0.8px;color:#606060">SHOW ROLES</div>
<div class="a" style="left:283px;top:844px;width:22px;height:22px;border-radius:50%;border:1px solid #767676;background:#fff"></div>
<div class="t" style="left:311px;top:846px;height:19px;line-height:19px;font-size:13px;letter-spacing:0.87px;color:#606060">SHOW USER NAMES</div>
<svg class="a" style="left:260px;top:860px" width="1200" height="176" viewBox="260 860 1200 176">
<g fill="none" stroke="#666" stroke-width="2">
<path d="M351 951 V974"/><path d="M345 966 L351 974 L357 966"/>
<path d="M853 902 V877.5 H529.5 V901"/><path d="M523.5 893 L529.5 901 L535.5 893"/>
<path d="M518 951 V998.8 H1282"/><path d="M1274 992.8 L1282 998.8 L1274 1004.8"/>
<path d="M853 951 V998.8 M1021 951 V998.8 M1188 951 V998.8"/>
<path d="M590 926.7 H613"/><path d="M605 920.7 L613 926.7 L605 932.7"/>
<path d="M758 926.7 H780"/><path d="M772 920.7 L780 926.7 L772 932.7"/>
<path d="M925 926.7 H947.5"/><path d="M939.5 920.7 L947.5 926.7 L939.5 932.7"/>
<path d="M1093 926.7 H1115"/><path d="M1107 920.7 L1115 926.7 L1107 932.7"/>
<path d="M1260 926.7 H1282.5"/><path d="M1274.5 920.7 L1282.5 926.7 L1274.5 932.7"/>
</g>
<g stroke="#8c8c8c" stroke-width="2" fill="#e8e8e8">
<rect x="279" y="903" width="144" height="47"/>
<rect x="447" y="903" width="142.5" height="47"/>
<rect x="782" y="903" width="142.5" height="47"/>
<rect x="949.5" y="903" width="143.0" height="47"/>
<rect x="1117" y="903" width="142.5" height="47"/>
</g>
<rect x="614.5" y="902.7" width="143" height="48" rx="24" fill="#e8e8e8" stroke="#777" stroke-width="1.5"/>
<rect x="1284.5" y="903" width="143" height="47" fill="#009a17" stroke="#3a8a3a" stroke-width="1.5"/>
<rect x="280" y="976" width="142" height="46" rx="23" fill="#666" stroke="#777" stroke-width="1"/>
<rect x="1284" y="975" width="143.5" height="47" rx="23.5" fill="#e85343" stroke="#b04a3c" stroke-width="1.2"/>
<g transform="translate(672,957.5)"><g fill="none" stroke="#a5a5a5" stroke-width="2.4"><rect x="11" y="1.2" width="6" height="5.6" rx="1.2"/><path d="M14 6.8 V13 M3.5 18 V13 H24.5 V18 M14 13 V18"/><rect x="0.8" y="18.5" width="5.6" height="7.5" rx="1.4"/><rect x="11.2" y="18.5" width="5.6" height="7.5" rx="1.4"/><rect x="21.6" y="18.5" width="5.6" height="7.5" rx="1.4"/></g></g>
</svg>
<div class="t" style="left:278px;width:146px;text-align:center;top:917.6px;height:18px;line-height:18px;font-size:12px;font-weight:bold;letter-spacing:-0.1px;color:#555">SUBMITTER</div>
<div class="t" style="left:446px;width:144px;text-align:center;top:917.6px;height:18px;line-height:18px;font-size:10px;font-weight:bold;letter-spacing:-0.3px;color:#555">PROJECT ACCOUNTANT</div>
<div class="t" style="left:614px;width:144px;text-align:center;top:917.6px;height:18px;line-height:18px;font-size:12px;font-weight:bold;letter-spacing:0px;color:#555">ESTIMATE</div>
<div class="t" style="left:781px;width:144px;text-align:center;top:917.6px;height:18px;line-height:18px;font-size:12.5px;color:#555;letter-spacing:0.2px">CEO</div>
<div class="t" style="left:948px;width:145px;text-align:center;top:917.6px;height:18px;line-height:18px;font-size:12.5px;color:#555;letter-spacing:0.2px">CFO</div>
<div class="t" style="left:1116px;width:144px;text-align:center;top:917.6px;height:18px;line-height:18px;font-size:12.5px;color:#555;letter-spacing:0.2px">CEO</div>
<div class="t" style="left:1283px;width:145px;text-align:center;top:917.6px;height:18px;line-height:18px;font-size:12px;font-weight:bold;color:#d8f5c0">FINAL APPROVE</div>
<div class="t" style="left:279px;width:143px;text-align:center;top:989.6px;height:18px;line-height:18px;font-size:12px;font-weight:bold;color:#f4f4f4">WITHDRAW</div>
<div class="t" style="left:1283px;width:145px;text-align:center;top:989.6px;height:18px;line-height:18px;font-size:12px;font-weight:bold;color:#fbe8e4">REJECT</div>
<div class="a" style="left:1889px;top:0;width:25px;height:1036px;background:#f0f0f0"></div>
<div class="a" style="left:1891px;top:122px;width:21px;height:851px;background:#a8a8a8"></div>
<svg class="a" style="left:1895px;top:7px" width="14" height="9"><path d="M1 8 H13 L7 1.5 Z" fill="#505050"/></svg>
</body></html>
